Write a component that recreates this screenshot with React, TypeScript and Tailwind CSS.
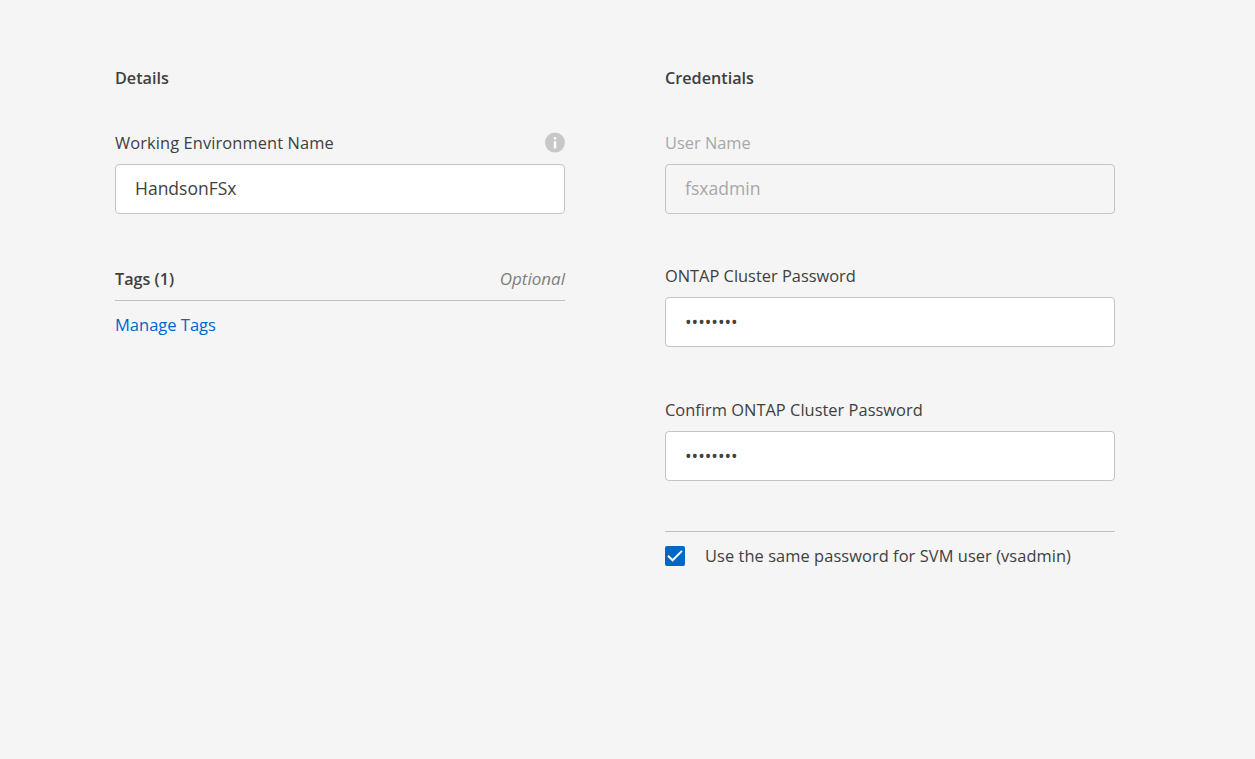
import type { ReactNode } from "react";

function Heading({ children }: { children: ReactNode }) {
  return <h2 className="h-6 text-[16.2px] leading-6 font-semibold whitespace-nowrap">{children}</h2>;
}

function InfoIcon() {
  return (
    <svg width="20" height="20" viewBox="0 0 20 20" overflow="visible" aria-hidden="true">
      <circle cx="10" cy="9.6" r="10" fill="#c8c8c8" />
      <rect x="8.8" y="4.1" width="2.4" height="2.4" fill="#fff" />
      <rect x="8.8" y="8.2" width="2.4" height="7.2" fill="#fff" />
    </svg>
  );
}

function Field({ label, labelClass = "", info, disabled, children }: { label: string; labelClass?: string; info?: boolean; disabled?: boolean; children: ReactNode }) {
  return (
    <div className={disabled ? "text-[#a8a8a8]" : ""}>
      <div className="flex h-6 items-center justify-between">
        <label className={`text-[16.4px] leading-6 whitespace-nowrap ${labelClass}`}>{label}</label>
        {info && <InfoIcon />}
      </div>
      <div
        className={
          disabled
            ? "mt-[9px] flex h-[50px] items-center rounded border border-[#c4c4c4] pl-[19px]"
            : "mt-[9px] flex h-[50px] items-center rounded border border-[#c4c4c4] bg-white pl-[19px]"
        }
      >
        {children}
      </div>
    </div>
  );
}

function Password() {
  return <span className="text-[17.5px] leading-6">••••••••</span>;
}

export default function App() {
  return (
    <main className="flex h-[759px] w-full gap-[100px] bg-[#f5f5f5] pt-[66px] pl-[115px] font-['Open_Sans',sans-serif] text-[#404040]">
      <section className="w-[450px]">
        <Heading>Details</Heading>
        <div className="mt-[41px]">
          <Field label="Working Environment Name" labelClass="tracking-[0.11px]" info>
            <span className="pb-[2px] text-[17.5px] leading-6">HandsonFSx</span>
          </Field>
        </div>
        <div className="mt-[53px] flex h-[34px] justify-between border-b border-[#c0c0c0]">
          <Heading>Tags (1)</Heading>
          <span className="text-[17px] leading-6 text-[#7f7f7f] italic">Optional</span>
        </div>
        <a href="#" className="mt-3 inline-block text-[16.5px] leading-6 text-[#0067c5]">Manage Tags</a>
      </section>
      <section className="w-[450px]">
        <Heading>Credentials</Heading>
        <div className="mt-[41px] flex flex-col">
          <Field label="User Name" disabled>
            <span className="pb-[2px] text-[17.6px] leading-6">fsxadmin</span>
          </Field>
          <div className="mt-[50px] flex flex-col gap-[51px]">
            <Field label="ONTAP Cluster Password">
              <Password />
            </Field>
            <Field label="Confirm ONTAP Cluster Password" labelClass="tracking-[0.03px]">
              <Password />
            </Field>
          </div>
        </div>
        <div className="mt-[50px] flex items-center border-t border-[#c0c0c0] pt-3">
          <span className="flex size-5 items-center justify-center rounded-[2px] bg-[#0067c5]">
            <svg width="20" height="20" viewBox="0 0 20 20" fill="none" stroke="#fff" strokeWidth="2" aria-hidden="true">
              <path d="M3 9.7 7.6 14.3 17 4.9" />
            </svg>
          </span>
          <span className="ml-5 text-[16.4px] leading-6 tracking-[0.075px] whitespace-nowrap">Use the same password for SVM user (vsadmin)</span>
        </div>
      </section>
    </main>
  );
}
